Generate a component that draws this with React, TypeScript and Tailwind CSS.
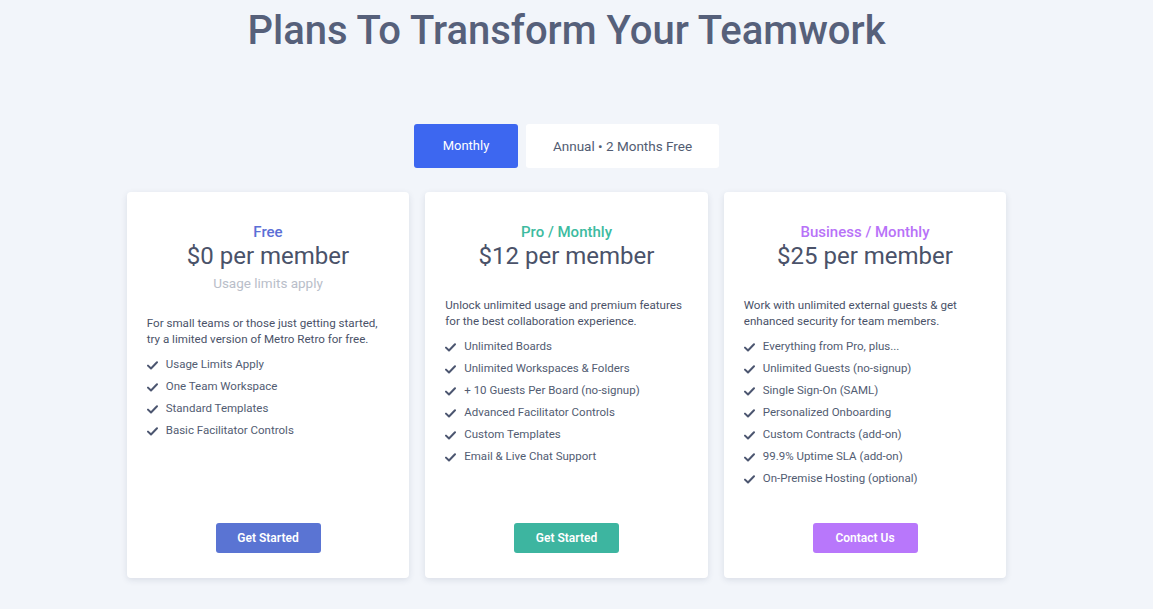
import React, { useState } from 'react';

type Plan = {
  name: string;
  price: string;
  note?: string;
  blurb: string;
  features: string[];
  cta: string;
  titleColor: string;
  btnColor: string;
};

const plans: Plan[] = [
  {
    name: 'Free',
    price: '$0 per member',
    note: 'Usage limits apply',
    blurb: 'For small teams or those just getting started, try a limited version of Metro Retro for free.',
    features: ['Usage Limits Apply', 'One Team Workspace', 'Standard Templates', 'Basic Facilitator Controls'],
    cta: 'Get Started',
    titleColor: 'text-[#5b6fd6]',
    btnColor: 'bg-[#5a74d3]',
  },
  {
    name: 'Pro / Monthly',
    price: '$12 per member',
    blurb: 'Unlock unlimited usage and premium features for the best collaboration experience.',
    features: [
      'Unlimited Boards',
      'Unlimited Workspaces & Folders',
      '+ 10 Guests Per Board (no-signup)',
      'Advanced Facilitator Controls',
      'Custom Templates',
      'Email & Live Chat Support',
    ],
    cta: 'Get Started',
    titleColor: 'text-[#3dbba0]',
    btnColor: 'bg-[#3db5a0]',
  },
  {
    name: 'Business / Monthly',
    price: '$25 per member',
    blurb: 'Work with unlimited external guests & get enhanced security for team members.',
    features: [
      'Everything from Pro, plus...',
      'Unlimited Guests (no-signup)',
      'Single Sign-On (SAML)',
      'Personalized Onboarding',
      'Custom Contracts (add-on)',
      '99.9% Uptime SLA (add-on)',
      'On-Premise Hosting (optional)',
    ],
    cta: 'Contact Us',
    titleColor: 'text-[#b872f8]',
    btnColor: 'bg-[#b877fb]',
  },
];

const Check = () => (
  <svg width="11" height="9" viewBox="0 0 11 9" className="shrink-0 text-[#4c5670]">
    <path d="M1 4.6 L4 7.5 L10 1.3" fill="none" stroke="currentColor" strokeWidth="2" strokeLinecap="round" strokeLinejoin="round" />
  </svg>
);

const PlanCard: React.FC<{ plan: Plan }> = ({ plan }) => (
  <div className="w-[282.5px] h-[386px] bg-white rounded-[4px] shadow-[0_2px_6px_rgba(40,55,90,0.12)] flex flex-col px-5 pt-[30px] pb-[25px]">
    <div className="text-center">
      <div className={`text-[15px] leading-5 font-medium ${plan.titleColor}`}>{plan.name}</div>
      <div className="text-[24px] leading-[28px] text-[#4a5269]">{plan.price}</div>
      {plan.note && <div className="mt-1 text-[13.5px] leading-[18px] text-[#b9bec9]">{plan.note}</div>}
    </div>
    <p className={`${plan.note ? 'mt-[23px]' : 'mt-[27px]'} text-[11.6px] leading-4 text-[#4a5268]`}>{plan.blurb}</p>
    <ul className="mt-[7px]">
      {plan.features.map((f) => (
        <li key={f} className="flex items-center gap-2 h-[22px] text-[11.5px] text-[#525c72]">
          <Check />
          <span>{f}</span>
        </li>
      ))}
    </ul>
    <div className="mt-auto flex justify-center">
      <button type="button" className={`${plan.btnColor} h-[30px] w-[105px] rounded-[3px] text-white text-[12px] font-semibold`}>
        {plan.cta}
      </button>
    </div>
  </div>
);

export default function App() {
  const [annual, setAnnual] = useState(false);

  return (
    <div className="min-h-screen bg-[#f2f5fa] font-['Roboto',sans-serif] pt-[7px] pr-[20px]">
      <h1 className="text-center text-[40px] leading-[48px] font-medium text-[#56607a]">Plans To Transform Your Teamwork</h1>

      <div className="mt-[69px] flex justify-center gap-2">
        <button
          type="button"
          onClick={() => setAnnual(false)}
          className={`h-11 w-[104px] rounded-[3px] text-[13px] ${!annual ? 'bg-[#3d67f0] text-white' : 'bg-white text-[#525c72]'}`}
        >
          Monthly
        </button>
        <button
          type="button"
          onClick={() => setAnnual(true)}
          className={`h-11 w-[193px] rounded-[3px] text-[13.5px] ${annual ? 'bg-[#3d67f0] text-white' : 'bg-white text-[#525c72]'}`}
        >
          Annual • 2 Months Free
        </button>
      </div>

      <div className="mt-6 flex justify-center gap-4">
        {plans.map((p) => (
          <PlanCard key={p.name} plan={p} />
        ))}
      </div>
    </div>
  );
}
